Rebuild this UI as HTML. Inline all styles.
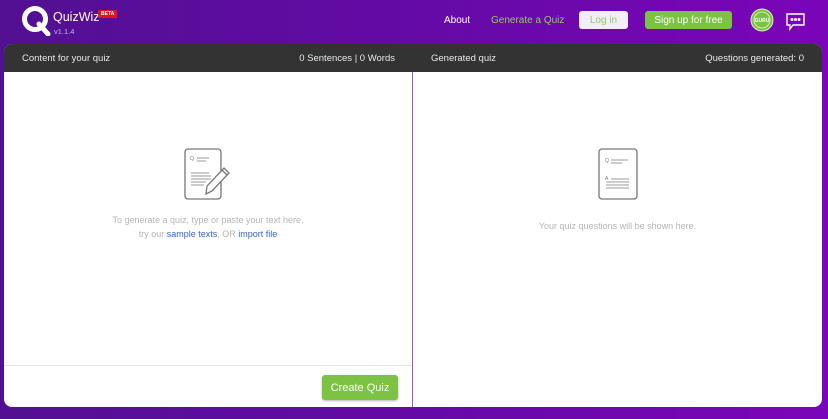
<!DOCTYPE html>
<html><head><meta charset="utf-8"><style>
*{box-sizing:border-box;margin:0;padding:0}
body{width:828px;height:419px;overflow:hidden;font-family:"Liberation Sans",sans-serif;background:linear-gradient(90deg,#521092 0%,#640aa6 50%,#7b05b9 100%);position:relative}
.t{position:absolute;white-space:nowrap}
.panel{position:absolute;left:4px;top:44px;width:818px;height:363px;background:#fff;border-radius:8px;overflow:hidden}
.hd{position:absolute;left:0;top:0;width:818px;height:28px;background:#333;color:#e8e8e8;font-size:9.5px}
.hd .t{top:9px}
.div{position:absolute;left:408px;top:28px;width:1px;height:335px;background:#9b5cd0}
.btn{position:absolute;border-radius:3px;font-size:10px;display:flex;align-items:center;justify-content:center}
</style></head><body>
<svg class="t" style="left:20px;top:4px" width="32" height="32" viewBox="0 0 32 32"><circle cx="15" cy="15" r="10.5" fill="none" stroke="#fff" stroke-width="5"/><path d="M19 20 L28 30" stroke="#fff" stroke-width="5" stroke-linecap="round"/></svg>
<div class="t" style="left:53px;top:10px;color:#fff;font-size:12.5px">QuizWiz</div>
<div class="t" style="left:98px;top:10px;background:#e0151f;color:#fff;font-size:5px;padding:1px 3px;font-weight:bold">BETA</div>
<div class="t" style="left:54px;top:27px;color:#c9b3e0;font-size:7.5px">v1.1.4</div>
<div class="t" style="left:444px;top:15px;color:#fff;font-size:10px">About</div>
<div class="t" style="left:491px;top:15px;color:#8fcc5a;font-size:10px">Generate a Quiz</div>
<div class="btn" style="left:579px;top:11px;width:49px;height:18px;background:#f3ecfa;color:#8fcc5a">Log in</div>
<div class="btn" style="left:645px;top:11px;width:87px;height:18px;background:#7cc243;color:#fff">Sign up for free</div>
<svg class="t" style="left:750px;top:8px" width="24" height="24"><circle cx="12" cy="12" r="11" fill="#7cc243" stroke="#d8f0c0" stroke-width="1"/><circle cx="12" cy="12" r="8" fill="none" stroke="#e8f7d8" stroke-width="0.8"/><text x="12" y="14" font-size="5" fill="#fff" text-anchor="middle" font-family="Liberation Sans" font-weight="bold">GURU</text></svg>
<svg class="t" style="left:785px;top:12px" width="22" height="20"><path d="M2 2 H19 V13 H8 L5 17 V13 H2 Z" fill="none" stroke="#fff" stroke-width="1.4"/><circle cx="7" cy="7.5" r="1.5" fill="#fff"/><circle cx="10.5" cy="7.5" r="1.5" fill="#fff"/><circle cx="14" cy="7.5" r="1.5" fill="#fff"/></svg>
<div class="panel">
<div class="hd"><div class="t" style="left:18px">Content for your quiz</div><div class="t" style="right:427px">0 Sentences | 0 Words</div><div class="t" style="left:427px">Generated quiz</div><div class="t" style="right:18px">Questions generated: 0</div></div>
<div class="div"></div>
<svg class="t" style="left:180px;top:104px" width="50" height="52"><rect x="1" y="1" width="36" height="50" rx="3" fill="none" stroke="#777" stroke-width="1.3"/><text x="6" y="12" font-size="5" fill="#777" font-family="Liberation Sans">Q</text><path d="M13 10H25M13 13H22M7 25H25M7 28H27M7 31H27M7 34H22M7 37H20" stroke="#999" stroke-width="1"/><path d="M22 46 L23 38 L40 20 L45 25 L28 43 Z M38 22 L43 27" fill="#fff" stroke="#777" stroke-width="1.3"/></svg>
<div class="t" style="left:0;width:408px;top:169px;text-align:center;color:#b5b5b5;font-size:9px;line-height:14px">To generate a quiz, type or paste your text here,<br>try our <span style="color:#3366cc">sample texts</span>, OR <span style="color:#3366cc">import file</span></div>
<div style="position:absolute;left:0;top:321px;width:408px;height:1px;background:#e3e3e3"></div>
<div class="btn" style="left:318px;top:331px;width:76px;height:25px;background:#7cc243;color:#fff;font-size:11px;box-shadow:0 1px 2px rgba(0,0,0,.3)">Create Quiz</div>
<svg class="t" style="left:594px;top:104px" width="40" height="52"><rect x="1" y="1" width="38" height="50" rx="3" fill="none" stroke="#777" stroke-width="1.3"/><text x="7" y="14" font-size="5" fill="#777" font-family="Liberation Sans">Q</text><path d="M13 12H30M13 15H24M13 31H31M8 34H31M8 37H31M8 40H31" stroke="#999" stroke-width="1"/><text x="7" y="32" font-size="5" fill="#777" font-family="Liberation Sans">A</text></svg>
<div class="t" style="left:409px;width:409px;top:177px;text-align:center;color:#b5b5b5;font-size:9px">Your quiz questions will be shown here.</div>
</div>
</body></html>
